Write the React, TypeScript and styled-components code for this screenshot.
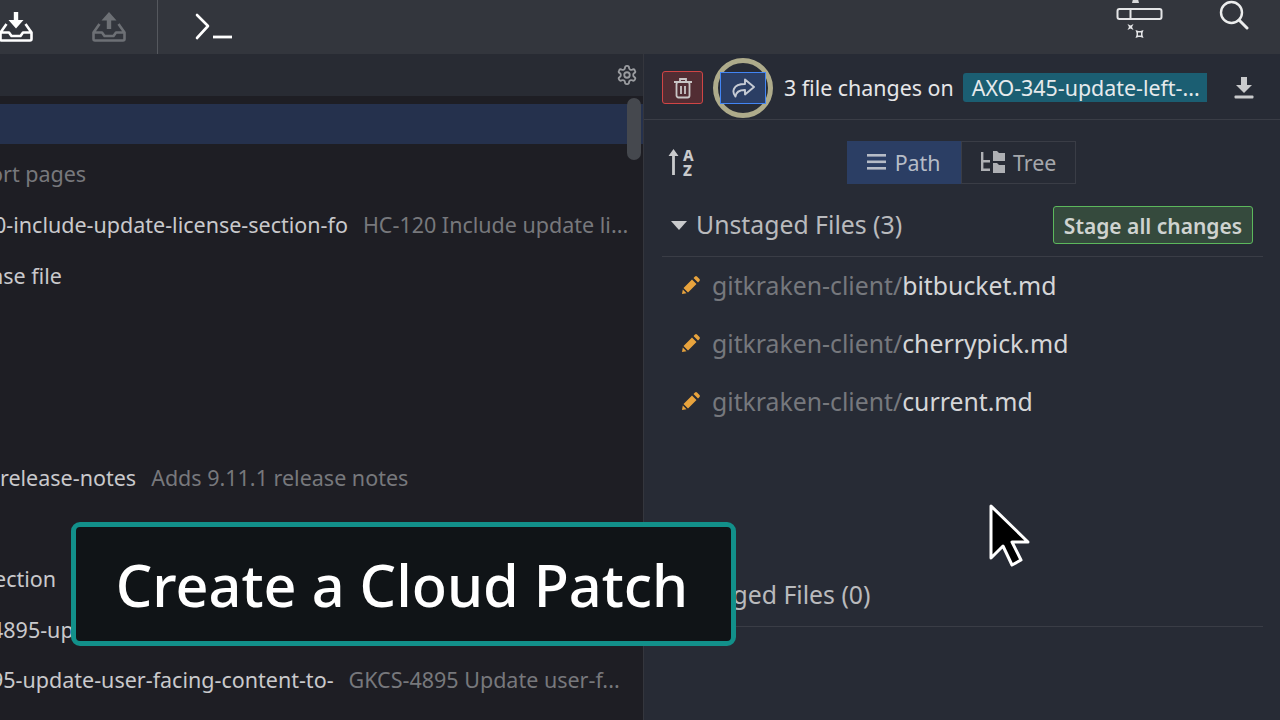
import React from "react";
import styled, { createGlobalStyle } from "styled-components";

const GlobalStyle = createGlobalStyle`
  html, body {
    margin: 0;
    padding: 0;
    width: 1280px;
    height: 720px;
    overflow: hidden;
    background: #272b35;
    font-family: "Noto Sans", "Open Sans", sans-serif;
  }
`;

const commits = [
  { offset: 0, selected: true },
  { offset: -10, message: "ort pages" },
  {
    offset: -6,
    branch: "0-include-update-license-section-fo",
    message: "HC-120 Include update li...",
  },
  { offset: -10, message: "nse file", bright: true },
  { offset: 0 },
  { offset: 0 },
  { offset: 0 },
  {
    offset: 0,
    branch: "release-notes",
    message: "Adds 9.11.1 release notes",
  },
  { offset: 0 },
  { offset: -6, message: "ection", bright: true },
  { offset: -9, branch: "4895-update" },
  {
    offset: -9,
    branch: "95-update-user-facing-content-to-",
    message: "GKCS-4895 Update user-f...",
  },
];

const files = ["bitbucket.md", "cherrypick.md", "current.md"];

const TRAY =
  "M7.500 12 1.500 20.500V27a1.500 1.500 0 0 0 1.500 1.500h28a1.500 1.500 0 0 0 1.500-1.500v-6.500L26.500 12M1.500 20.500h8.500l2.500 3.500h9l2.500-3.500h8.500";

const App = () => {
  return (
    <Page>
      <GlobalStyle />
      <Toolbar>
        <ToolSlot>
          <InboxIcon $left={-1}>
            <svg width="34" height="30" viewBox="0 0 34 30" fill="none">
              <path d="M14.800 0h4.400v8h5.300L17 16.500 9.500 8h5.300z" fill="#fff" />
              <path d={TRAY} stroke="#fff" strokeWidth="2.600" strokeLinejoin="round" />
            </svg>
          </InboxIcon>
          <InboxIcon $left={92}>
            <svg width="34" height="30" viewBox="0 0 34 30" fill="none">
              <path d="M14.800 17V8.500H9.500L17 0l7.500 8.500h-5.300V17z" fill="#6d7075" />
              <path d={TRAY} stroke="#6d7075" strokeWidth="2.600" strokeLinejoin="round" />
            </svg>
          </InboxIcon>
        </ToolSlot>
        <TerminalSlot>
          <svg width="38" height="28" viewBox="0 0 38 28" fill="none">
            <path d="M2 2 13 13 2 25" stroke="#fff" strokeWidth="2.600" strokeLinecap="round" strokeLinejoin="round" />
            <path d="M18 24h19" stroke="#fff" strokeWidth="2.800" />
          </svg>
        </TerminalSlot>
        <ToolSpacer />
        <GroupIcon>
          <svg width="48" height="40" viewBox="0 0 48 40" fill="none">
            <rect x="1.500" y="10" width="44" height="10" rx="2" stroke="#e4e5e7" strokeWidth="2" />
            <path d="M14.500 10v10" stroke="#e4e5e7" strokeWidth="2" />
            <path d="M17 0h5l1 4h-7z" fill="#d8d9db" />
            <path d="M11.500 25l3 1.500 3-1.500-1.500 3 1.500 3-3-1.500-3 1.500 1.500-3z" fill="#e4e5e7" />
            <path
              d="M19.500 31l3 1h2l3-1-1 3v2l1 3-3-1h-2l-3 1 1-3v-2zM22 33.500v3h3v-3z"
              fill="#e4e5e7"
              fillRule="evenodd"
            />
          </svg>
        </GroupIcon>
        <SearchIcon>
          <svg width="30" height="30" viewBox="0 0 30 30" fill="none">
            <circle cx="12.500" cy="12.500" r="10.500" stroke="#eceded" strokeWidth="2.400" />
            <path d="m20 20 8 8" stroke="#eceded" strokeWidth="3" strokeLinecap="round" />
          </svg>
        </SearchIcon>
      </Toolbar>
      <Body>
        <LeftPane>
          <LeftHeader>
            <svg width="22" height="22" viewBox="0 0 24 24" fill="none" stroke="#9a9ca0" strokeWidth="2">
              <path d="M12.200 2h-.4a2 2 0 0 0-2 2v.2a2 2 0 0 1-1 1.700l-.4.3a2 2 0 0 1-2 0l-.2-.1a2 2 0 0 0-2.700.7l-.2.4a2 2 0 0 0 .7 2.700l.2.1a2 2 0 0 1 1 1.700v.5a2 2 0 0 1-1 1.800l-.2.1a2 2 0 0 0-.7 2.700l.2.4a2 2 0 0 0 2.700.7l.2-.1a2 2 0 0 1 2 0l.4.3a2 2 0 0 1 1 1.700v.2a2 2 0 0 0 2 2h.4a2 2 0 0 0 2-2v-.2a2 2 0 0 1 1-1.700l.4-.3a2 2 0 0 1 2 0l.2.1a2 2 0 0 0 2.700-.7l.2-.4a2 2 0 0 0-.7-2.700l-.2-.1a2 2 0 0 1-1-1.800v-.5a2 2 0 0 1 1-1.700l.2-.1a2 2 0 0 0 .7-2.700l-.2-.4a2 2 0 0 0-2.700-.7l-.2.1a2 2 0 0 1-2 0l-.4-.3a2 2 0 0 1-1-1.700V4a2 2 0 0 0-2-2z" />
              <circle cx="12" cy="12" r="3" />
            </svg>
          </LeftHeader>
          <CommitList>
            {commits.map((c, i) => (
              <CommitRow key={i} $selected={!!c.selected} $offset={c.offset}>
                {c.branch ? <BranchName>{c.branch}</BranchName> : null}
                {c.message ? <CommitMessage $bright={!!c.bright}>{c.message}</CommitMessage> : null}
              </CommitRow>
            ))}
            <ScrollThumb />
          </CommitList>
        </LeftPane>
        <RightPane>
          <ActionBar>
            <TrashButton>
              <svg width="20" height="22" viewBox="0 0 20 22" fill="none" stroke="#c9c6c6" strokeWidth="1.800">
                <path d="M1 5h18M7 5V2h6v3" />
                <rect x="3.500" y="5" width="13" height="15.500" rx="2" />
                <path d="M8 9v8M12 9v8" />
              </svg>
            </TrashButton>
            <ShareRing>
              <ShareButton>
                <svg width="24" height="20" viewBox="0 0 24 20" fill="none" stroke="#c6cbd4" strokeWidth="1.900" strokeLinejoin="round">
                  <path d="M14 1.500 23 9l-9 7.500V12C8.500 12 5 13.500 4.500 18.500 1 14.500 1 6 14 6z" />
                </svg>
              </ShareButton>
            </ShareRing>
            <ChangeCount>3 file changes on</ChangeCount>
            <BranchTag>AXO-345-update-left-...</BranchTag>
            <DownloadIcon>
              <svg width="20" height="22" viewBox="0 0 20 22" fill="#c9cacc">
                <path d="M7 0h6v8h5l-8 8-8-8h5z" />
                <rect x="0.500" y="18.500" width="19" height="3" rx="1" />
              </svg>
            </DownloadIcon>
          </ActionBar>
          <ViewBar>
            <SortIcon>
              <svg width="11" height="26" viewBox="0 0 11 26" fill="#c9cacc">
                <path d="M5.500 0 10.500 7H6.900v19H4.100V7H.5z" />
              </svg>
              <SortLetters>
                <span>A</span>
                <span>Z</span>
              </SortLetters>
            </SortIcon>
            <ViewToggle>
              <ToggleButton $active>
                <svg width="20" height="16" viewBox="0 0 20 16" fill="#b6bcc7">
                  <rect y="0" width="19" height="2.600" />
                  <rect y="6.500" width="19" height="2.600" />
                  <rect y="13" width="19" height="2.600" />
                </svg>
                Path
              </ToggleButton>
              <ToggleButton $active={false}>
                <svg width="25" height="22" viewBox="0 0 25 22" fill="#aeb0b4">
                  <path d="M1 1h2.400v8H10v2.400H3.400v6H10V20H1z" />
                  <path d="M13 0h4l2 2h6v8H13zM13 12h4l2 2h6v8H13z" />
                </svg>
                Tree
              </ToggleButton>
            </ViewToggle>
          </ViewBar>
          <SectionHeader>
            <Caret />
            <SectionTitle>Unstaged Files (3)</SectionTitle>
            <StageButton>Stage all changes</StageButton>
          </SectionHeader>
          <FileList>
            {files.map((f) => (
              <FileRow key={f}>
                <svg width="20" height="20" viewBox="0 0 20 20" fill="#e8a33d">
                  <path d="M14 1.500a1.500 1.500 0 0 1 2 0l2.500 2.500a1.500 1.500 0 0 1 0 2L17 7.500 12.500 3zM11 4.500 15.500 9 7 17.500 2.500 13zM1.800 14.500 5.500 18.200 1 19z" />
                </svg>
                <FilePath>gitkraken-client/</FilePath>
                <FileName>{f}</FileName>
              </FileRow>
            ))}
          </FileList>
          <StagedHeader>
            <StagedTitle>Staged Files (0)</StagedTitle>
          </StagedHeader>
        </RightPane>
      </Body>
      <Caption>Create a Cloud Patch</Caption>
      <Cursor>
        <svg width="42" height="64" viewBox="0 0 42 64">
          <path
            d="M2 2V54L14 42l9 19 9-5-9-18h16z"
            fill="#000"
            stroke="#fff"
            strokeWidth="3"
            strokeLinejoin="round"
          />
        </svg>
      </Cursor>
    </Page>
  );
};

export default App;

const Page = styled.div`
  position: relative;
  width: 1280px;
  height: 720px;
  overflow: hidden;
  display: flex;
  flex-direction: column;
`;

const Toolbar = styled.div`
  display: flex;
  align-items: stretch;
  height: 54px;
  flex: none;
  background: #33363d;
`;

const ToolSlot = styled.div`
  position: relative;
  width: 157px;
  border-right: 1px solid #55585e;
`;

const InboxIcon = styled.div<{ $left: number }>`
  position: absolute;
  left: ${({ $left }) => $left}px;
  top: 12px;
`;

const TerminalSlot = styled.div`
  margin-left: 37px;
  padding-top: 13px;
`;

const ToolSpacer = styled.div`
  flex: 1;
`;

const GroupIcon = styled.div`
  margin-right: 55px;
  margin-top: -1px;
`;

const SearchIcon = styled.div`
  margin-right: 31px;
`;

const Body = styled.div`
  display: flex;
  flex: 1;
  min-height: 0;
`;

const LeftPane = styled.div`
  width: 643px;
  flex: none;
  background: #1e1e24;
  border-right: 1px solid #34363d;
  display: flex;
  flex-direction: column;
`;

const LeftHeader = styled.div`
  height: 42px;
  flex: none;
  background: #282b33;
  display: flex;
  align-items: center;
  justify-content: flex-end;
  padding-right: 5px;
`;

const CommitList = styled.div`
  position: relative;
  padding-top: 8px;
  overflow: hidden;
`;

const CommitRow = styled.div<{ $selected: boolean; $offset: number }>`
  height: ${({ $selected }) => ($selected ? 40 : 50.6)}px;
  margin-bottom: ${({ $selected }) => ($selected ? 4.6 : 0)}px;
  background: ${({ $selected }) => ($selected ? "#25314d" : "transparent")};
  margin-left: ${({ $offset }) => $offset}px;
  display: flex;
  align-items: center;
  gap: 15px;
  font-size: 21.5px;
  white-space: nowrap;
`;

const BranchName = styled.span`
  color: #c9c9cc;
`;

const CommitMessage = styled.span<{ $bright: boolean }>`
  color: ${({ $bright }) => ($bright ? "#c9c9cc" : "#77787c")};
`;

const ScrollThumb = styled.div`
  position: absolute;
  right: 2px;
  top: 2px;
  width: 14px;
  height: 62px;
  border-radius: 7px;
  background: #45484e;
`;

const RightPane = styled.div`
  flex: 1;
  background: #272b35;
  display: flex;
  flex-direction: column;
`;

const ActionBar = styled.div`
  height: 66px;
  box-sizing: border-box;
  padding: 2px 0 0 18px;
  flex: none;
  display: flex;
  align-items: center;
  border-bottom: 1px solid #3a3d46;
`;

const TrashButton = styled.div`
  width: 41px;
  height: 33px;
  box-sizing: border-box;
  border: 1.5px solid #d04545;
  border-radius: 3px;
  background: #522d33;
  display: flex;
  align-items: center;
  justify-content: center;
`;

const ShareRing = styled.div`
  width: 60px;
  height: 60px;
  box-sizing: border-box;
  margin-left: 10px;
  border: 5px solid #aeab8b;
  border-radius: 50%;
  display: flex;
  align-items: center;
  justify-content: center;
`;

const ShareButton = styled.div`
  width: 46px;
  height: 32px;
  flex: none;
  box-sizing: border-box;
  border: 1.5px solid #4285f4;
  background: #2b3e64;
  display: flex;
  align-items: center;
  justify-content: center;
`;

const ChangeCount = styled.span`
  margin-left: 11px;
  font-size: 21.4px;
  color: #e6e6e8;
  white-space: nowrap;
`;

const BranchTag = styled.span`
  margin-left: 9px;
  width: 244px;
  height: 29px;
  box-sizing: border-box;
  padding-left: 9px;
  background: #1b5e72;
  border-radius: 3px 0 0 3px;
  font-size: 21.4px;
  line-height: 29px;
  color: #e6eaec;
  white-space: nowrap;
`;

const DownloadIcon = styled.div`
  margin-left: 27px;
  display: flex;
`;

const ViewBar = styled.div`
  height: 84px;
  flex: none;
  display: flex;
  align-items: center;
  padding-left: 24px;
`;

const SortIcon = styled.div`
  display: flex;
  align-items: center;
  gap: 4px;
`;

const SortLetters = styled.div`
  display: flex;
  flex-direction: column;
  gap: 1px;
  font-size: 15px;
  font-weight: 800;
  line-height: 14px;
  color: #c9cacc;

  span {
    display: block;
    height: 14px;
  }
`;

const ViewToggle = styled.div`
  display: flex;
  margin-left: 153px;
`;

const ToggleButton = styled.div<{ $active: boolean }>`
  height: 43px;
  box-sizing: border-box;
  width: ${({ $active }) => ($active ? 114 : 115)}px;
  border: 1px solid ${({ $active }) => ($active ? "#2b3e64" : "#3a3d46")};
  background: ${({ $active }) => ($active ? "#2b3e64" : "transparent")};
  color: ${({ $active }) => ($active ? "#b6bcc7" : "#a5a7ab")};
  display: flex;
  align-items: center;
  justify-content: center;
  gap: 8px;
  font-size: 21.4px;
`;

const SectionHeader = styled.div`
  height: 53px;
  box-sizing: border-box;
  padding-bottom: 10px;
  flex: none;
  margin: 0 17px 0 18px;
  border-bottom: 1px solid #3a3d46;
  display: flex;
  align-items: center;
`;

const Caret = styled.div`
  width: 0;
  height: 0;
  margin: 0 9px 0 9px;
  border-left: 8px solid transparent;
  border-right: 8px solid transparent;
  border-top: 9px solid #c9cacc;
`;

const SectionTitle = styled.span`
  flex: 1;
  font-size: 24.800px;
  color: #b9babd;
  margin-top: -3px;
`;

const StageButton = styled.div`
  width: 200px;
  height: 38px;
  margin-right: 10px;
  padding-top: 2px;
  box-sizing: border-box;
  border: 1.5px solid #5cb85c;
  border-radius: 3px;
  background: #354a3d;
  color: #cfd3d0;
  font-size: 21px;
  font-weight: 600;
  display: flex;
  align-items: center;
  justify-content: center;
  white-space: nowrap;
`;

const FileList = styled.div`
  display: flex;
  flex-direction: column;
  margin-top: -1px;
  padding: 0 0 0 37px;
`;

const FileRow = styled.div`
  height: 58px;
  display: flex;
  align-items: center;
  font-size: 24.800px;
  white-space: nowrap;

  svg {
    margin-right: 11px;
  }
`;

const FilePath = styled.span`
  color: #76787d;
`;

const FileName = styled.span`
  color: #d5d6d8;
`;

const StagedHeader = styled.div`
  margin: 147px 17px 0 18px;
  height: 50px;
  box-sizing: border-box;
  border-bottom: 1px solid #3a3d46;
  display: flex;
  align-items: flex-start;
`;

const StagedTitle = styled.span`
  margin-left: 34px;
  font-size: 24.800px;
  color: #b9babd;
`;

const Caption = styled.div`
  position: absolute;
  left: 71px;
  top: 522px;
  width: 665px;
  height: 124px;
  box-sizing: border-box;
  border: 5px solid #12908a;
  border-radius: 9px;
  background: #101417;
  color: #fff;
  font-size: 57.600px;
  font-weight: 500;
  padding: 1px 3px 0 0;
  display: flex;
  align-items: center;
  justify-content: center;
  white-space: nowrap;
`;

const Cursor = styled.div`
  position: absolute;
  left: 989px;
  top: 504px;
`;
